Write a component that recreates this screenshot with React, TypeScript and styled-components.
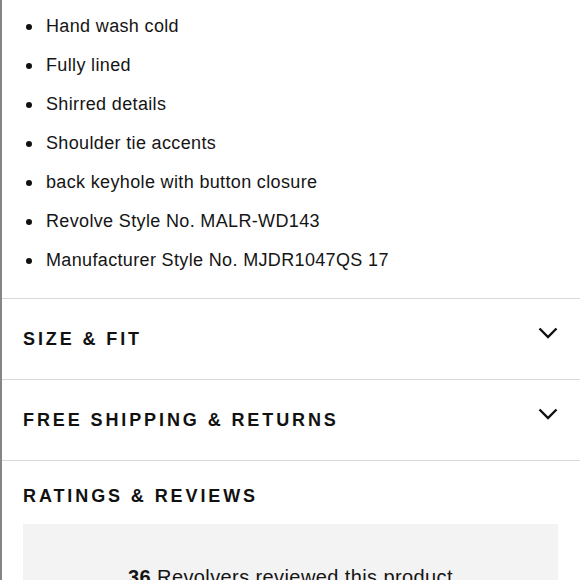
import styled, { createGlobalStyle } from 'styled-components'

const GlobalStyle = createGlobalStyle`
  html, body {
    margin: 0;
    padding: 0;
    background: #fff;
  }
  body {
    font-family: "Liberation Sans", Arial, sans-serif;
    color: #111;
  }
`

const Page = styled.div`
  width: 580px;
  height: 580px;
  box-sizing: border-box;
  border-left: 2px solid #858585;
  overflow: hidden;
  background: #fff;
`

const Details = styled.ul`
  list-style: none;
  margin: 0;
  padding: 7px 0 18px 44px;
`

const Item = styled.li`
  position: relative;
  font-size: 18px;
  line-height: 39px;
  letter-spacing: 0.35px;
  color: #151515;

  &::before {
    content: '';
    position: absolute;
    left: -20px;
    top: 17px;
    width: 6px;
    height: 6px;
    border-radius: 50%;
    background: #111;
  }
`

const Section = styled.div`
  border-top: 1px solid #d9d9d9;
`

const Toggle = styled.div`
  height: 80px;
  display: flex;
  align-items: center;
  justify-content: space-between;
  padding: 0 22px 0 21px;
`

const Heading = styled.h2`
  margin: 0;
  font-size: 18px;
  line-height: 20px;
  font-weight: 700;
  letter-spacing: 2.9px;
  text-transform: uppercase;
  color: #111;
`

const Chevron = styled.svg`
  width: 20px;
  height: 12px;
  margin-top: -12px;
`

const Ratings = styled.div`
  padding: 25px 22px 0 21px;
`

const ReviewBox = styled.div`
  margin-top: 18px;
  background: #f3f3f3;
  height: 120px;
  padding-top: 42px;
  box-sizing: border-box;
  text-align: center;
  font-size: 20px;
  letter-spacing: 0.4px;
  color: #151515;

  strong {
    font-weight: 700;
  }
`

const details = [
  'Hand wash cold',
  'Fully lined',
  'Shirred details',
  'Shoulder tie accents',
  'back keyhole with button closure',
  'Revolve Style No. MALR-WD143',
  'Manufacturer Style No. MJDR1047QS 17',
]

const sections = ['Size & Fit', 'Free Shipping & Returns']

function ChevronDown() {
  return (
    <Chevron viewBox="0 0 20 12" fill="none">
      <path d="M1.5 1.5 L10 10 L18.5 1.5" stroke="#111" strokeWidth="2.4" />
    </Chevron>
  )
}

function App() {
  return (
    <>
      <GlobalStyle />
      <Page>
        <Details>
          {details.map((d) => (
            <Item key={d}>{d}</Item>
          ))}
        </Details>
        {sections.map((s) => (
          <Section key={s}>
            <Toggle>
              <Heading>{s}</Heading>
              <ChevronDown />
            </Toggle>
          </Section>
        ))}
        <Section>
          <Ratings>
            <Heading>Ratings &amp; Reviews</Heading>
            <ReviewBox>
              <strong>36</strong> Revolvers reviewed this product
            </ReviewBox>
          </Ratings>
        </Section>
      </Page>
    </>
  )
}

export default App
